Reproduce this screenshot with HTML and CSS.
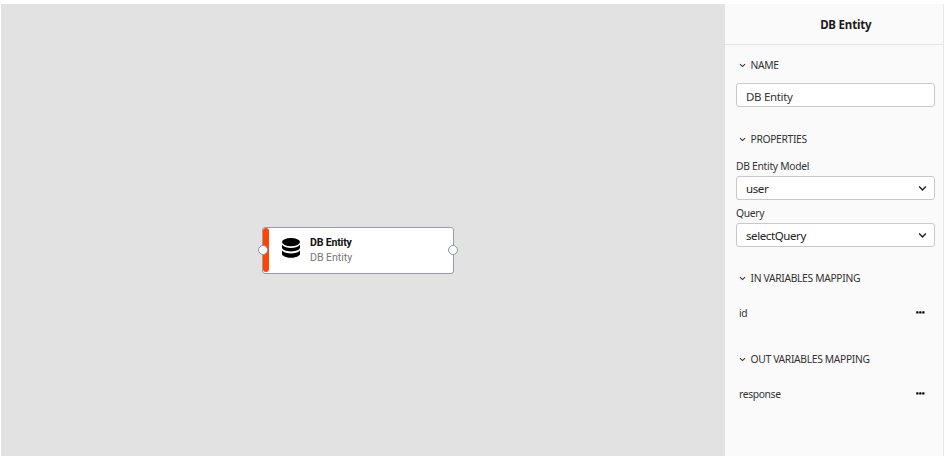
FILE: index.html
```html
<!DOCTYPE html>
<html lang="en">
<head>
<meta charset="utf-8">
<title>DB Entity</title>
<link rel="stylesheet" href="styles.css">
</head>
<body>
<svg class="defs" width="0" height="0">
  <symbol id="chevron" viewBox="0 0 8 6"><path d="M1 1.3 4 4.3 7 1.3" fill="none" stroke="currentColor" stroke-width="1.3"/></symbol>
  <symbol id="dots" viewBox="0 0 9 3"><rect x="0.2" y="0.3" width="2.3" height="2.2" rx=".6"/><rect x="3.2" y="0.3" width="2.3" height="2.2" rx=".6"/><rect x="6.2" y="0.3" width="2.3" height="2.2" rx=".6"/></symbol>
</svg>
<div class="app">
  <main class="canvas">
    <div class="node">
      <span class="accent"></span>
      <svg class="db" viewBox="0 0 18 20">
        <ellipse cx="9" cy="4.1" rx="9" ry="4.1"/>
        <path d="M0 6.8C2 9.1 5.5 9.9 9 9.9S16 9.1 18 6.8V9.6C18 11.8 14 13.5 9 13.5S0 11.8 0 9.6Z"/>
        <path d="M0 12.6C2 14.9 5.5 15.6 9 15.6S16 14.9 18 12.6V15.7C18 18 14 19.7 9 19.7S0 18 0 15.7Z"/>
      </svg>
      <div class="node-text">
        <div class="node-title">DB Entity</div>
        <div class="node-sub">DB Entity</div>
      </div>
      <span class="port port-in"></span>
      <span class="port port-out"></span>
    </div>
  </main>
  <aside class="panel">
    <h1 class="panel-title">DB Entity</h1>
    <div class="panel-body">
      <h2 class="section"><svg class="chev"><use href="#chevron"/></svg><span>NAME</span></h2>
      <div class="field name-field"><span>DB Entity</span></div>
      <h2 class="section properties"><svg class="chev"><use href="#chevron"/></svg><span>PROPERTIES</span></h2>
      <div class="label">DB Entity Model</div>
      <div class="field"><span>user</span><svg class="arrow"><use href="#chevron"/></svg></div>
      <div class="label query">Query</div>
      <div class="field"><span>selectQuery</span><svg class="arrow"><use href="#chevron"/></svg></div>
      <h2 class="section in-vars"><svg class="chev"><use href="#chevron"/></svg><span>IN VARIABLES MAPPING</span></h2>
      <div class="variable"><span>id</span><svg class="dots"><use href="#dots"/></svg></div>
      <h2 class="section out-vars"><svg class="chev"><use href="#chevron"/></svg><span>OUT VARIABLES MAPPING</span></h2>
      <div class="variable"><span>response</span><svg class="dots"><use href="#dots"/></svg></div>
    </div>
  </aside>
</div>
</body>
</html>
```
FILE: styles.css
```css
* { box-sizing: border-box; }
body { margin: 0; background: #fff; font-family: "Noto Sans", sans-serif; color: #333; overflow: hidden; }
.defs { position: absolute; }
.app { display: flex; height: 456px; padding: 4px 1px 0 1px; }
.canvas { position: relative; flex: 1; background: #e2e2e2; }
.node { position: absolute; left: 261px; top: 223px; width: 192px; height: 47px; display: flex; background: #fff; border: 1px solid #9a9aa8; border-radius: 3px; font-family: Roboto, sans-serif; }
.accent { width: 6px; height: 44px; background: #ff4500; border-radius: 3px; }
.db { width: 18px; height: 20px; margin: 10px 0 0 13px; }
.node-text { margin: 8px 0 0 10px; font-size: 10.6px; line-height: 14.5px; white-space: nowrap; }
.node-title { font-weight: 700; color: #111; letter-spacing: -.2px; }
.node-sub { color: #777; letter-spacing: -.05px; }
.port { position: absolute; top: 17px; width: 10px; height: 10px; border: 1px solid #8598ad; border-radius: 50%; background: #fff; }
.port-in { left: -5px; }
.port-out { right: -5px; }
.panel { width: 219.5px; background: #fafafa; border-right: 1px solid #e6e6e6; }
.panel-title { margin: 0; height: 41px; padding-left: 24px; border-bottom: 1px solid #e4e4e4; font-size: 11.5px; font-weight: 700; line-height: 42px; text-align: center; color: #1b1b1b; letter-spacing: -.2px; }
.panel-body { padding: 12px 8px 0 11.5px; }
.section { display: flex; align-items: center; height: 16px; margin: 0; padding-left: 3px; font-size: 10.3px; font-weight: 400; line-height: 16px; letter-spacing: -.33px; }
.chev { width: 7px; height: 5px; margin: 1px 5px 0 -.5px; }
.field { display: flex; align-items: center; justify-content: space-between; height: 24px; padding: 1px 7px 0 9px; background: #fff; border: 1px solid #c9c9c9; border-radius: 3px; font-size: 11.5px; line-height: 16px; color: #222; letter-spacing: -.4px; }
.name-field { margin-top: 10px; padding-top: 3px; color: #333; letter-spacing: -.32px; }
.properties { margin-top: 24px; }
.label { height: 14px; margin-top: 12px; margin-bottom: 3px; font-size: 10.3px; line-height: 14px; letter-spacing: -.28px; }
.query { margin-top: 6px; }
.arrow { width: 9px; height: 7px; }
.in-vars { margin-top: 23px; }
.variable { display: flex; align-items: center; justify-content: space-between; height: 16px; margin-top: 19px; padding: 0 10px 0 3px; font-size: 10.3px; line-height: 16px; letter-spacing: -.35px; }
.dots { width: 9px; height: 3px; margin-bottom: 2px; }
.out-vars { margin-top: 30px; }
```
